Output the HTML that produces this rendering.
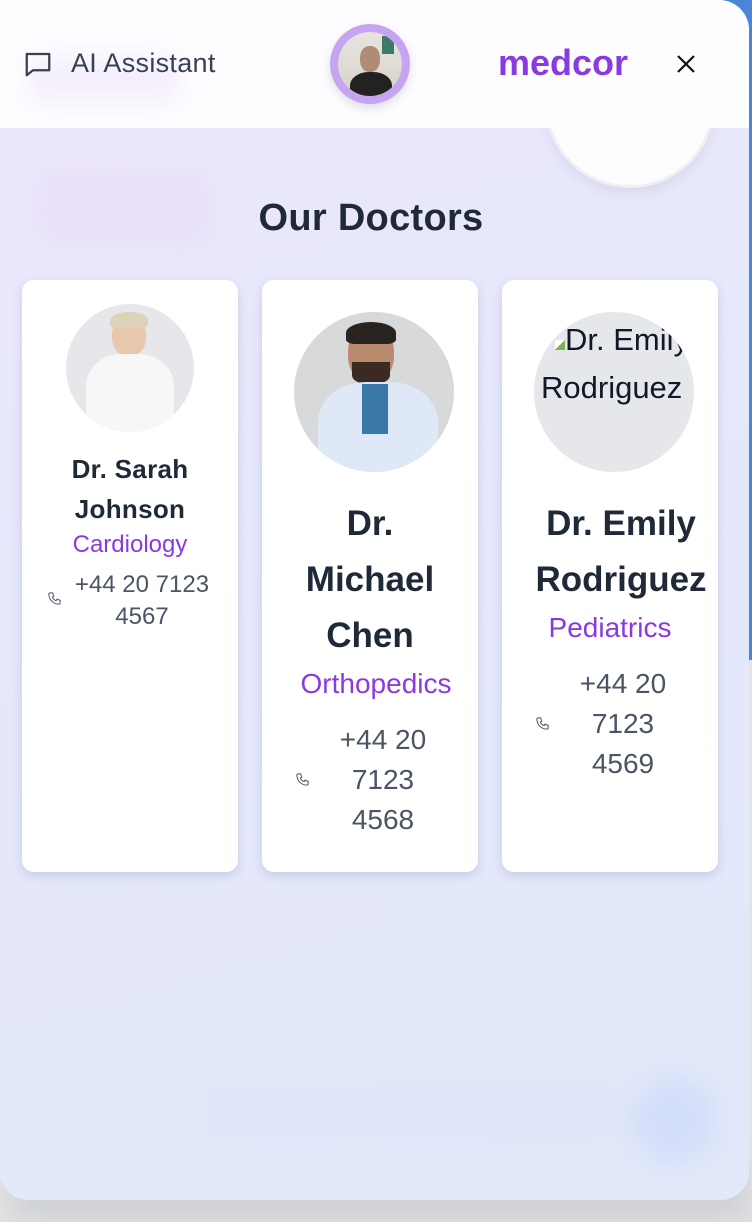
<!DOCTYPE html>
<html><head><meta charset="utf-8"><style>
*{margin:0;padding:0;box-sizing:border-box}
html,body{width:752px;height:1222px;overflow:hidden;background:#e4e4e6;font-family:"Liberation Sans",sans-serif}
.bgblue{position:absolute;right:0;top:0;width:60px;height:660px;background:#4a86d8}
.shadow{position:absolute;left:10px;top:1160px;width:740px;height:60px;background:#cfd0d3;filter:blur(14px)}
.panel{position:absolute;left:0;top:0;width:749px;height:1200px;border-radius:0 30px 28px 28px;overflow:hidden;background:linear-gradient(160deg,#ede7fb 0%,#e6e8fb 40%,#e1e8f9 100%)}
.hdr{position:absolute;left:0;top:0;width:100%;height:128px;background:#fdfcff}
.blur{position:absolute;filter:blur(10px)}
.card{position:absolute;top:280px;width:216px;height:592px;background:#fff;border-radius:12px;box-shadow:0 4px 10px rgba(80,80,140,.18)}
.t{position:absolute;text-align:center;white-space:nowrap}
.name{color:#1f2937;font-weight:bold}
.spec{color:#8a3ae0}
.ph{color:#4b5563}
.av{position:absolute;border-radius:50%;overflow:hidden;background:#e5e7eb}
</style></head><body>
<div class="bgblue"></div>
<div class="shadow"></div>
<div class="panel">
  <div class="blur" style="left:40px;top:172px;width:168px;height:70px;background:#e8dcf9;border-radius:14px;opacity:.7"></div>
  <div style="position:absolute;left:545px;top:20px;width:170px;height:168px;border-radius:50%;background:#fdfdff;box-shadow:0 6px 10px rgba(120,120,160,.12);border:3px solid #f0eff4"></div>
  <div class="blur" style="left:200px;top:1080px;width:420px;height:60px;background:#dde4f8;opacity:.4"></div>
  <div class="blur" style="left:632px;top:1078px;width:84px;height:84px;border-radius:50%;background:#d3def9"></div>
  <div class="hdr"></div>
  <div class="blur" style="left:30px;top:60px;width:148px;height:40px;background:#f4eefc;border-radius:12px"></div>
  <svg style="position:absolute;left:23px;top:49px" width="30" height="30" viewBox="0 0 24 24" fill="none" stroke="#374151" stroke-width="1.8" stroke-linejoin="round"><path d="M3 4h18v13H8l-5 4z"/></svg>
  <div style="position:absolute;left:71px;top:48px;font-size:27px;letter-spacing:0.3px;color:#374151">AI Assistant</div>
  <div style="position:absolute;left:330px;top:24px;width:80px;height:80px;border-radius:50%;background:#c7a4f2;box-shadow:0 4px 10px rgba(0,0,0,.12)">
    <div style="position:absolute;left:8px;top:8px;width:64px;height:64px;border-radius:50%;overflow:hidden;background:linear-gradient(#e7e5df,#d4d2c8)">
      <div style="position:absolute;left:22px;top:14px;width:20px;height:26px;border-radius:45%;background:#b08c76"></div>
      <div style="position:absolute;left:12px;top:40px;width:42px;height:30px;border-radius:45% 45% 0 0;background:#222"></div>
      <div style="position:absolute;left:44px;top:4px;width:12px;height:18px;background:#3e7a6a"></div>
    </div>
  </div>
  <div style="position:absolute;left:498px;top:42px;font-size:36px;font-weight:bold;color:#8a3ae0">medcor</div>
  <svg style="position:absolute;left:675px;top:53px" width="22" height="22" viewBox="0 0 22 22" stroke="#111" stroke-width="2.2"><path d="M3 3L19 19M19 3L3 19"/></svg>
  <div class="t name" style="left:0;width:742px;top:197px;font-size:38px;letter-spacing:0.3px">Our Doctors</div>

  <div class="card" style="left:22px"></div>
  <div class="card" style="left:262px"></div>
  <div class="card" style="left:502px"></div>

  <div class="av" style="left:66px;top:304px;width:128px;height:128px">
    <div style="position:absolute;left:46px;top:12px;width:34px;height:40px;border-radius:45%;background:#e8c7ad"></div>
    <div style="position:absolute;left:44px;top:8px;width:38px;height:16px;border-radius:50% 50% 20% 20%;background:#ddd3b8"></div>
    <div style="position:absolute;left:20px;top:50px;width:88px;height:80px;border-radius:40% 40% 0 0;background:#f7f7f7"></div>
  </div>
  <div class="av" style="left:294px;top:312px;width:160px;height:160px;background:#d8d9db">
    <div style="position:absolute;left:54px;top:14px;width:46px;height:56px;border-radius:45%;background:#b98a6e"></div>
    <div style="position:absolute;left:52px;top:10px;width:50px;height:22px;border-radius:50% 50% 20% 20%;background:#2a2420"></div>
    <div style="position:absolute;left:58px;top:50px;width:38px;height:22px;border-radius:0 0 40% 40%;background:#3a2a22"></div>
    <div style="position:absolute;left:24px;top:70px;width:120px;height:100px;border-radius:40% 40% 0 0;background:#dfe8f6"></div>
    <div style="position:absolute;left:68px;top:72px;width:26px;height:50px;background:#3b78a8"></div>
  </div>
  <div class="av" style="left:534px;top:312px;width:160px;height:160px">
    <div style="position:absolute;left:7px;top:4px;font-size:31px;color:#111827;line-height:48px;white-space:nowrap"><span style="display:inline-block;width:10px;height:10px;margin-left:14px;background:linear-gradient(135deg,#fff 50%,#7ab45a 50%)"></span>Dr. Emily<br>Rodriguez</div>
  </div>

  <div class="t name" style="left:22px;width:216px;top:449px;font-size:26px;line-height:40px;letter-spacing:0.3px">Dr. Sarah<br>Johnson</div>
  <div class="t spec" style="left:22px;width:216px;top:531px;font-size:24px">Cardiology</div>
  <svg style="position:absolute;left:47px;top:591px" width="15" height="15" viewBox="0 0 24 24" fill="none" stroke="#4b5563" stroke-width="1.6"><path d="M5 3h4l2 5-2.5 1.5a11 11 0 0 0 6 6L16 13l5 2v4a2 2 0 0 1-2 2A16 16 0 0 1 3 5a2 2 0 0 1 2-2z"/></svg>
  <div class="t ph" style="left:62px;width:160px;top:569px;font-size:24px;line-height:32px">+44 20 7123<br>4567</div>

  <div class="t name" style="left:262px;width:216px;top:496px;font-size:35px;line-height:56px">Dr.<br>Michael<br>Chen</div>
  <div class="t spec" style="left:262px;width:228px;top:668px;font-size:28px">Orthopedics</div>
  <svg style="position:absolute;left:295px;top:772px" width="15" height="15" viewBox="0 0 24 24" fill="none" stroke="#4b5563" stroke-width="1.6"><path d="M5 3h4l2 5-2.5 1.5a11 11 0 0 0 6 6L16 13l5 2v4a2 2 0 0 1-2 2A16 16 0 0 1 3 5a2 2 0 0 1 2-2z"/></svg>
  <div class="t ph" style="left:318px;width:130px;top:720px;font-size:28px;line-height:40px">+44 20<br>7123<br>4568</div>

  <div class="t name" style="left:512px;width:218px;top:496px;font-size:35px;line-height:56px">Dr. Emily<br>Rodriguez</div>
  <div class="t spec" style="left:502px;width:216px;top:612px;font-size:28px">Pediatrics</div>
  <svg style="position:absolute;left:535px;top:716px" width="15" height="15" viewBox="0 0 24 24" fill="none" stroke="#4b5563" stroke-width="1.6"><path d="M5 3h4l2 5-2.5 1.5a11 11 0 0 0 6 6L16 13l5 2v4a2 2 0 0 1-2 2A16 16 0 0 1 3 5a2 2 0 0 1 2-2z"/></svg>
  <div class="t ph" style="left:558px;width:130px;top:664px;font-size:28px;line-height:40px">+44 20<br>7123<br>4569</div>
</div>
</body></html>
